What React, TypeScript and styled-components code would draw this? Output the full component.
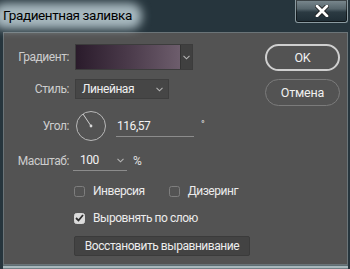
import styled, { createGlobalStyle } from 'styled-components';

const GlobalStyle = createGlobalStyle`
  html, body {
    margin: 0;
    padding: 0;
    background: #26353d;
  }
  * {
    box-sizing: border-box;
  }
`;

const Window = styled.div`
  width: 350px;
  height: 269px;
  background: #26353d;
  display: flex;
  flex-direction: column;
  padding: 0 2px 0 3px;
  font-family: Roboto, 'Liberation Sans', Arial, sans-serif;
  letter-spacing: -0.45px;
  overflow: hidden;
`;

const TitleBar = styled.div`
  height: 32px;
  display: flex;
  align-items: flex-start;
  justify-content: space-between;
`;

const TitleText = styled.div`
  position: relative;
  margin-top: 6px;
  font-size: 13.5px;
  letter-spacing: -0.4px;
  line-height: 18px;
  color: #000;
  padding-right: 6px;

  &::before {
    content: '';
    position: absolute;
    left: -10px;
    right: -4px;
    top: -3px;
    bottom: -5px;
    background: rgba(200, 218, 224, 0.8);
    border-radius: 12px;
    filter: blur(5px);
    z-index: 0;
  }

  span {
    position: relative;
    z-index: 1;
  }
`;

const CloseButton = styled.div`
  width: 53px;
  height: 23px;
  border: 1px solid #8b9aa0;
  border-top: none;
  border-radius: 0 0 3px 3px;
  background: linear-gradient(#7c8a90 0%, #56656c 40%, #2b3a42 55%, #1f2d35 100%);
  display: flex;
  align-items: center;
  justify-content: center;
  box-shadow: inset 0 0 0 1px rgba(0, 0, 0, 0.5);
`;

const Body = styled.div`
  height: 233px;
  background: #535353;
  border: 1px solid #6b7478;
  display: flex;
  padding: 11px 7px 0 0;
`;

const BottomEdge = styled.div`
  height: 4px;
  border-top: 1px solid #5d6d73;
  background: #a9b8bc;
  border-bottom: 1px solid #6f8086;
`;

const Form = styled.div`
  display: flex;
  flex-direction: column;
  width: 250px;
`;

const Row = styled.div<{ $h: number; $mt?: number }>`
  display: flex;
  align-items: center;
  height: ${(p) => p.$h}px;
  margin-top: ${(p) => p.$mt ?? 0}px;
`;

const Label = styled.div<{ $gap?: number }>`
  width: 65px;
  margin-right: ${(p) => p.$gap ?? 6}px;
  text-align: right;
  font-size: 12px;
  color: #cdcdcd;
  flex-shrink: 0;
`;

const Indent = styled.div`
  width: 70px;
  flex-shrink: 0;
`;

const GradientPicker = styled.div`
  display: flex;
  height: 26px;
  border: 1px solid #3c3c3c;
`;

const Swatch = styled.div`
  width: 104px;
  background: linear-gradient(90deg, #2a1b2b 0%, #4a3a4a 50%, #6d5d6c 100%);
`;

const DropPart = styled.div`
  width: 12px;
  background: #404040;
  display: flex;
  align-items: center;
  justify-content: center;
  border-left: 1px solid #333;
`;

const Select = styled.div`
  width: 94px;
  height: 20px;
  background: #464646;
  border: 1px solid #3e3e3e;
  display: flex;
  align-items: center;
  justify-content: space-between;
  padding: 0 5px 0 6px;
  font-size: 12px;
  color: #f0f0f0;
`;

const Dial = styled.svg`
  width: 32px;
  height: 32px;
  flex-shrink: 0;
`;

const UnderlinedInput = styled.div<{ $w: number; $pad: number }>`
  width: ${(p) => p.$w}px;
  height: 100%;
  display: flex;
  align-items: center;
  justify-content: space-between;
  padding: 0 3px 0 ${(p) => p.$pad}px;
  border-bottom: 1px solid #8c8c8c;
  font-size: 12px;
  color: #f2f2f2;
`;

const AngleField = styled.div`
  margin-left: 9px;
  height: 22px;
  display: flex;
  align-items: flex-start;
`;

const Degree = styled.span`
  margin-left: 7px;
  margin-top: 4px;
  font-size: 10px;
  color: #e0e0e0;
`;

const Unit = styled.span`
  margin-left: 6px;
  font-size: 12px;
  color: #e0e0e0;
`;

const Check = styled.label<{ $offset?: number }>`
  display: flex;
  align-items: center;
  gap: 8px;
  margin-left: ${(p) => p.$offset ?? 0}px;
  font-size: 12px;
  color: #ececec;
`;

const Box = styled.span<{ $checked?: boolean }>`
  width: 11px;
  height: 11px;
  border-radius: 2.5px;
  border: 1px solid ${(p) => (p.$checked ? '#d8d8d8' : '#7e7e7e')};
  background: ${(p) => (p.$checked ? '#dcdcdc' : 'transparent')};
  display: flex;
  align-items: center;
  justify-content: center;
  flex-shrink: 0;
`;

const ResetButton = styled.div`
  width: 176px;
  height: 20px;
  background: #434343;
  border: 1px solid #3b3b3b;
  border-radius: 2px;
  display: flex;
  align-items: center;
  justify-content: center;
  font-size: 12px;
  color: #ededed;
`;

const Actions = styled.div`
  margin-left: auto;
  display: flex;
  flex-direction: column;
  gap: 8px;
`;

const PillButton = styled.div<{ $primary?: boolean }>`
  width: 75px;
  height: 27px;
  border-radius: 14px;
  border: ${(p) => (p.$primary ? '2px solid #cfcfcf' : '1.5px solid #7b7b7b')};
  display: flex;
  align-items: center;
  justify-content: center;
  font-size: 12.5px;
  letter-spacing: -0.2px;
  color: #f0f0f0;
`;

const Chevron = () => (
  <svg width="7" height="5" viewBox="0 0 7 5">
    <polyline points="0.5,0.8 3.5,3.8 6.5,0.8" fill="none" stroke="#b4b4b4" strokeWidth="1.1" />
  </svg>
);

const Tick = () => (
  <svg width="9" height="8" viewBox="0 0 9 8">
    <polyline points="1,4 3.5,6.5 8,1" fill="none" stroke="#2c2c2c" strokeWidth="1.8" />
  </svg>
);

export default function App() {
  return (
    <>
      <GlobalStyle />
      <Window>
        <TitleBar>
          <TitleText>
            <span>Градиентная заливка</span>
          </TitleText>
          <CloseButton>
            <svg width="14" height="12" viewBox="0 0 14 12">
              <path d="M2 1 L12 11 M12 1 L2 11" stroke="#1a1a1a" strokeWidth="4.4" strokeLinecap="round" />
              <path d="M2 1 L12 11 M12 1 L2 11" stroke="#ffffff" strokeWidth="2.8" strokeLinecap="round" />
            </svg>
          </CloseButton>
        </TitleBar>
        <Body>
          <Form>
            <Row $h={26}>
              <Label>Градиент:</Label>
              <GradientPicker>
                <Swatch />
                <DropPart>
                  <Chevron />
                </DropPart>
              </GradientPicker>
            </Row>
            <Row $h={20} $mt={9}>
              <Label>Стиль:</Label>
              <Select>
                <span>Линейная</span>
                <Chevron />
              </Select>
            </Row>
            <Row $h={32} $mt={11}>
              <Label>Угол:</Label>
              <Dial viewBox="0 0 32 32">
                <circle cx="16" cy="16" r="14.5" fill="none" stroke="#b8b8b8" strokeWidth="1" />
                <line x1="16" y1="16" x2="8" y2="4" stroke="#cfcfcf" strokeWidth="1" />
                <circle cx="16" cy="16" r="1.4" fill="#d8d8d8" />
              </Dial>
              <AngleField>
                <UnderlinedInput $w={78} $pad={1}>116,57</UnderlinedInput>
                <Degree>°</Degree>
              </AngleField>
            </Row>
            <Row $h={21} $mt={8}>
              <Label $gap={4}>Масштаб:</Label>
              <UnderlinedInput $w={54} $pad={7}>
                <span>100</span>
                <Chevron />
              </UnderlinedInput>
              <Unit>%</Unit>
            </Row>
            <Row $h={14} $mt={13}>
              <Indent />
              <Check>
                <Box />
                Инверсия
              </Check>
              <Check $offset={24}>
                <Box />
                Дизеринг
              </Check>
            </Row>
            <Row $h={14} $mt={13}>
              <Indent />
              <Check>
                <Box $checked>
                  <Tick />
                </Box>
                Выровнять по слою
              </Check>
            </Row>
            <Row $h={20} $mt={11}>
              <Indent />
              <ResetButton>Восстановить выравнивание</ResetButton>
            </Row>
          </Form>
          <Actions>
            <PillButton $primary>OK</PillButton>
            <PillButton>Отмена</PillButton>
          </Actions>
        </Body>
        <BottomEdge />
      </Window>
    </>
  );
}
